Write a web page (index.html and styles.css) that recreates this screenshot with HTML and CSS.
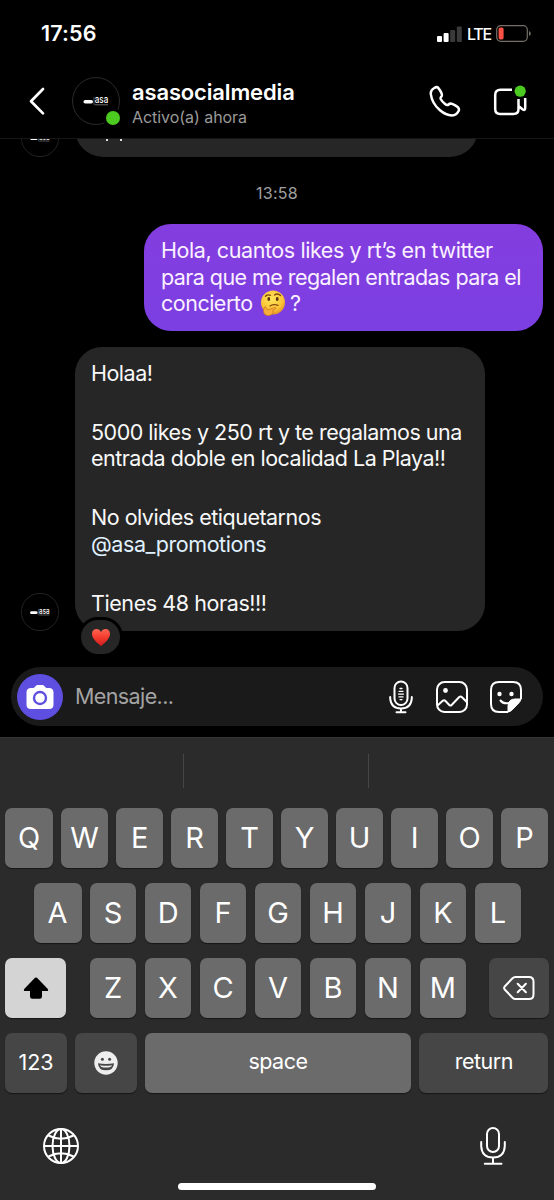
FILE: index.html
```html
<!DOCTYPE html>
<html lang="es">
<head>
<meta charset="utf-8">
<title>asasocialmedia</title>
<link rel="stylesheet" href="styles.css">
</head>
<body>
<svg class="defs" width="0" height="0">
  <defs>
    <symbol id="logo" viewBox="0 0 48 48">
      <circle cx="24" cy="24" r="23.5" fill="#000" stroke="#2b2b2b"/>
      <rect x="11.5" y="23" width="9.500" height="3.600" rx="1.800" fill="#fff"/>
      <path d="M22 20v8" stroke="#777" stroke-width=".7"/>
      <text x="22.800" y="26.200" textLength="13.500" lengthAdjust="spacingAndGlyphs" class="logo-text">asa</text>
      <path d="M23 27.800h13" stroke="#888" stroke-width=".8"/>
    </symbol>
  </defs>
</svg>
<div class="phone">
  <div class="status">
    <span class="clock">17:56</span>
    <svg class="signal" viewBox="0 0 25 16" width="25" height="16">
      <rect x="0" y="10" width="5" height="6" rx="1" fill="#fff"/>
      <rect x="6.6" y="7" width="5" height="9" rx="1" fill="#fff"/>
      <rect x="13.2" y="4" width="5" height="12" rx="1" fill="#3a3a3a"/>
      <rect x="19.8" y="0.5" width="5" height="15.5" rx="1" fill="#3a3a3a"/>
    </svg>
    <span class="net">LTE</span>
    <svg class="battery" viewBox="0 0 35 17" width="35" height="17">
      <rect x=".7" y=".7" width="30.6" height="15.6" rx="4" fill="none" stroke="#747068" stroke-width="1.2"/>
      <rect x="2.6" y="2.4" width="5" height="12" rx="1.6" fill="#fb5145"/>
      <path d="M33 6q1.8.8 1.8 2.5T33 11z" fill="#747068"/>
    </svg>
  </div>

  <header class="header">
    <svg class="back" viewBox="0 0 18 30" width="18" height="30"><path d="M15 3L3 15.200L15 27.400" fill="none" stroke="#fff" stroke-width="2.700" stroke-linecap="round" stroke-linejoin="round"/></svg>
    <div class="avatar"><svg width="48" height="48"><use href="#logo"/></svg><i class="online"></i></div>
    <div class="who"><div class="name">asasocialmedia</div><div class="state">Activo(a) ahora</div></div>
    <svg class="phone-icon" viewBox="0 0 32 32" width="32" height="32"><path d="M5.300 3C3 4.200 1.500 6 1.800 9C2.600 16 6.200 21.200 11 25.300C14.500 28.300 19 30.300 23 30.400C26 30.200 28.500 28.200 29.600 26C30.300 24.600 30 23.400 29 22.300C27 20.700 25.400 19.800 23.200 18.900C21.800 18.400 20.500 18.600 19.500 19.500C18.500 20.500 17.200 20 15.800 18.800C14.200 17.500 12.500 15.500 11.700 14C11.100 12.800 12 12.200 12.700 11.100C13.200 10 13 9.300 12.400 7.900C11.600 6.200 10.500 4.500 9.200 2.900C8.200 1.700 6.600 2.100 5.300 3Z" fill="none" stroke="#fff" stroke-width="2.500" stroke-linejoin="round"/></svg>
    <svg class="video-icon" viewBox="0 0 34 34" width="34" height="34">
      <path d="M19 5.700H7.500Q2.200 5.700 2.200 11V25Q2.200 30 7.200 30H20.500Q25.500 30 25.500 25V15M25.500 22L29.800 25.500Q32.200 26.800 32.200 24V14" fill="none" stroke="#fff" stroke-width="2.500" stroke-linejoin="round"/>
      <circle cx="27.200" cy="7.200" r="5.600" fill="#4bcb1f"/>
    </svg>
  </header>

  <main class="chat">
    <div class="previous">
      <svg class="mini" width="38" height="38"><use href="#logo"/></svg>
      <div class="cut"><i></i><i></i></div>
    </div>
    <div class="stamp">13:58</div>
    <div class="bubble sent">
      <p class="l1">Hola, cuantos likes y rt’s en twitter</p>
      <p class="l2">para que me regalen entradas para el</p>
      <p class="l3">concierto <svg class="thinking" viewBox="0 0 26 26" width="26" height="26" role="img" aria-label="🤔">
        <defs><radialGradient id="face" cx=".45" cy=".35" r=".65"><stop offset="0" stop-color="#ffe45a"/><stop offset=".7" stop-color="#fbc535"/><stop offset="1" stop-color="#e3942b"/></radialGradient></defs>
        <circle cx="13" cy="12.500" r="12" fill="url(#face)"/>
        <path d="M5.500 6.200Q7.500 4.200 10.500 5.300M14.500 5Q17.500 2.800 20.500 5.600" fill="none" stroke="#7a4510" stroke-width="1.300" stroke-linecap="round"/>
        <ellipse cx="8.800" cy="9" rx="1.400" ry="1.900" fill="#553211"/><ellipse cx="17.200" cy="9" rx="1.400" ry="1.900" fill="#553211"/>
        <path d="M10 16Q14 13.700 18 15.400" fill="none" stroke="#884b14" stroke-width="1.300" stroke-linecap="round"/>
        <path d="M4.200 17.200Q5.600 15.800 6.500 18L7.200 20L14.500 17.500Q16.500 17.300 15.500 19L12.500 20.500Q14 22 12.800 23.500Q11 26 7.300 25.600Q3.800 25 3.500 21.500Z" fill="#f7ad38" stroke="#ca7522" stroke-width=".7"/>
      </svg><span class="q">?</span></p>
    </div>
    <div class="incoming">
      <svg class="mini" width="38" height="38"><use href="#logo"/></svg>
      <div class="bubble received">
        <p class="r1">Holaa!</p>
        <p class="para r2">5000 likes y 250 rt y te regalamos una</p>
        <p class="r3">entrada doble en localidad La Playa!!</p>
        <p class="para r4">No olvides etiquetarnos</p>
        <p class="mention">@asa_promotions</p>
        <p class="para r5">Tienes 48 horas!!!</p>
        <div class="reaction"><svg viewBox="0 0 20 19" width="20" height="19" role="img" aria-label="❤️">
          <defs><linearGradient id="heart" x2="0" y2="1"><stop stop-color="#ff6554"/><stop offset=".5" stop-color="#f33b2d"/><stop offset="1" stop-color="#cc1c20"/></linearGradient></defs>
          <path d="M10 18.200C7 15.300 1 11.300 1 5.800C1 3 3 1 5.400 1C7.500 1 9.200 2.200 10 4.200C10.800 2.200 12.500 1 14.600 1C17 1 19 3 19 5.800C19 11.300 13 15.300 10 18.200Z" fill="url(#heart)"/></svg></div>
      </div>
    </div>
  </main>

  <div class="composer">
    <div class="camera"><svg viewBox="0 0 28 26" width="28" height="26">
      <path d="M5 4H7Q8.200 4 9 2.800Q10 1 11.500 1H16.500Q18 1 19 2.800Q19.800 4 21 4H23Q27.500 4 27.500 8.500V20.500Q27.500 25 23 25H5Q.5 25 .5 20.500V8.500Q.5 4 5 4Z" fill="#fff"/>
      <circle cx="14" cy="14" r="6" fill="none" stroke="#5f4fe0" stroke-width="2.400"/></svg></div>
    <span class="placeholder">Mensaje...</span>
    <svg class="voice" viewBox="0 0 24 34" width="24" height="34" fill="none" stroke="#fff" stroke-width="2" stroke-linecap="round">
      <rect x="5.500" y="1.500" width="13" height="23.500" rx="6.500"/>
      <path d="M1.200 17V18.500Q2 28.500 12 28.500T22.800 18.500V17M12 28.500V32M7.500 32.300H16.500"/>
      <path d="M11 8.500H13M10 11.300H14M9.500 14.100H14.500M10 16.900H14M11 19.600H13" stroke-width="1.300"/></svg>
    <svg class="photo" viewBox="0 0 32 32" width="32" height="32" fill="none" stroke="#fff" stroke-width="2" stroke-linejoin="round">
      <rect x="1" y="1" width="30" height="30" rx="7.500"/><circle cx="9.500" cy="9.500" r="2.400" fill="#fff" stroke="none"/>
      <path d="M1.500 24.500L7 19.600Q8.300 18.800 9.500 20L13.500 24.200Q14.600 25 15.600 24L23.500 15.800Q24.800 15 26 16.200L30.800 21"/></svg>
    <svg class="sticker" viewBox="0 0 32 32" width="32" height="32" fill="none" stroke="#fff" stroke-width="2" stroke-linejoin="round">
      <path d="M18 31H9Q1 31 1 23V9Q1 1 9 1H23Q31 1 31 9V18"/>
      <path d="M18 31V25Q18.500 18 25 18H31Q30.500 20 29 21.800L22 29Q20 30.800 18 31Z" fill="#fff" stroke-width="1"/>
      <circle cx="9.500" cy="13" r="2.200" fill="#fff" stroke="none"/><circle cx="21.500" cy="13" r="2.200" fill="#fff" stroke="none"/>
      <path d="M10.500 19.500Q13.500 23.200 18.500 22" stroke-linecap="round"/></svg>
  </div>

  <section class="keyboard">
    <div class="suggest"><i></i><i></i><i></i></div>
    <div class="row"><b class="key edge">Q</b><b class="key">W</b><b class="key">E</b><b class="key">R</b><b class="key">T</b><b class="key">Y</b><b class="key">U</b><b class="key">I</b><b class="key">O</b><b class="key">P</b></div>
    <div class="row second"><b class="key edge">A</b><b class="key">S</b><b class="key">D</b><b class="key">F</b><b class="key">G</b><b class="key">H</b><b class="key">J</b><b class="key">K</b><b class="key">L</b></div>
    <div class="row"><b class="key shift"><svg viewBox="0 0 26 22" width="26" height="22"><path d="M12 .8Q13 0 14 .8L24.800 12Q25.800 14 24 14H19V19.500Q19 21.800 16.700 21.800H9.300Q7 21.800 7 19.500V14H2Q.2 14 1.200 12Z" fill="#000"/></svg></b><b class="key">Z</b><b class="key">X</b><b class="key">C</b><b class="key">V</b><b class="key">B</b><b class="key">N</b><b class="key">M</b><b class="key dark delete"><svg viewBox="0 0 32 24" width="32" height="24" fill="none" stroke="#fff" stroke-width="2" stroke-linejoin="round" stroke-linecap="round"><path d="M12.500 1H26Q30.500 1 30.500 5.500V18.500Q30.500 23 26 23H12.500Q10.800 23 9.500 21.700L1.700 13.500Q.5 12 1.700 10.500L9.500 2.300Q10.800 1 12.500 1ZM14.700 7.800L22.900 16.200M22.900 7.800L14.700 16.200"/></svg></b></div>
    <div class="row bottom"><b class="key dark num">123</b><b class="key dark emoji"><svg viewBox="0 0 24 24" width="24" height="24"><circle cx="12" cy="12" r="11.700" fill="#eee"/><circle cx="8.400" cy="8.300" r="1.500" fill="#474747"/><circle cx="15.600" cy="8.300" r="1.500" fill="#474747"/><path d="M4 12.200Q12 13.800 20 12.200Q19.700 19.300 12 19.300T4 12.200Z" fill="#474747"/><path d="M6 14.200Q12 15.300 18 14.200Q17.500 16.500 12 16.500T6 14.200Z" fill="#eee"/></svg></b><b class="key space">space</b><b class="key dark return">return</b></div>
    <div class="tools">
      <svg viewBox="0 0 36 36" width="36" height="36" fill="none" stroke="#fff" stroke-width="2"><circle cx="18" cy="18" r="17"/><ellipse cx="18" cy="18" rx="8.500" ry="17"/><path d="M18 1V35M1 18H35M5.500 7.500Q18 14 30.500 7.500M5.500 28.500Q18 22 30.500 28.500"/></svg>
      <svg viewBox="0 0 26 38" width="26" height="38" fill="none" stroke="#fff" stroke-width="2" stroke-linecap="round"><rect x="7" y="1" width="12" height="24" rx="6"/><path d="M1.200 15V19Q1.700 30.500 13 30.500T24.800 19V15M13 30.500V36.500M4.800 36.800H21.500"/></svg>
    </div>
    <div class="home"></div>
  </section>
</div>
</body>
</html>
```
FILE: styles.css
```css
* { box-sizing: border-box; }
body { margin: 0; background: #000; }
.defs { position: absolute; }
svg { display: block; flex: none; }
.phone { width: 554px; height: 1200px; overflow: hidden; display: flex; flex-direction: column; background: #000; color: #fff; font-family: Inter, "Liberation Sans", sans-serif; }
.logo-text { font: 500 10px Inter, sans-serif; fill: #fff; }

.status { height: 67px; flex: none; display: flex; align-items: center; padding-left: 41px; }
.clock { width: 396px; padding-bottom: 1px; font-size: 21.5px; font-weight: 600; letter-spacing: .15px; }
.net { width: 26px; margin-left: 5px; font-size: 16px; font-weight: 450; letter-spacing: -1.3px; }
.battery { margin-left: 3px; }

.header { height: 72px; flex: none; display: flex; align-items: center; padding: 0 0 3px 28px; border-bottom: 1px solid #161616; }
.avatar { position: relative; margin-left: 26px; }
.online { position: absolute; right: 0; bottom: 0; width: 14px; height: 14px; border-radius: 50%; background: #4bcb1f; box-shadow: 0 0 0 3px #000; }
.who { width: 297px; margin-left: 12px; padding-top: 5px; }
.name { font-size: 22px; line-height: 26px; font-weight: 600; letter-spacing: -.15px; }
.state { font-size: 16px; line-height: 24px; color: #9a9a9a; letter-spacing: -.05px; }
.video-icon { margin-left: 32px; }

.chat { height: 528px; flex: none; overflow: hidden; display: flex; flex-direction: column; }
.previous { height: 18px; flex: none; display: flex; align-items: flex-end; padding-left: 21px; overflow: hidden; }
.cut { display: flex; gap: 12px; width: 403px; height: 58px; margin-left: 16px; padding: 40px 0 0 31px; border-radius: 28px; background: #262626; }
.cut i { width: 2px; height: 2px; background: #ddd; }
.stamp { margin-top: 26px; text-align: center; font-size: 16px; line-height: 20px; color: #a0a0a0; letter-spacing: .3px; }
.bubble { padding: 13px 16px; border-radius: 27px; font-size: 21.5px; line-height: 26.700px; letter-spacing: -.5px; }
.bubble p { margin: 0; white-space: nowrap; }
.sent { width: 399px; height: 107px; flex: none; margin: 21px 0 0 144px; padding-left: 17px; background: linear-gradient(#843ddf, #7b3fe2); color: #fbf0ff; }
.l1 { letter-spacing: -.42px; }
.l2 { letter-spacing: -.56px; }
.l3 { display: flex; height: 27px; white-space: pre !important; }
.thinking { margin-left: 2px; }
.q { margin-left: 4px; }
.incoming { display: flex; align-items: flex-end; margin: 16px 0 0 21px; }
.received { position: relative; width: 410px; height: 284px; margin-left: 16px; background: #262626; color: #f8f8f8; }
.bubble .para { margin-top: 32px; }
.mention { color: #e0f1ff; letter-spacing: -.42px; }
.r5 { letter-spacing: -.42px; }
.reaction { position: absolute; left: 3px; bottom: -26px; width: 45px; height: 40px; display: flex; align-items: center; justify-content: center; border: 3px solid #000; border-radius: 20px; background: #262626; }

.composer { height: 59px; flex: none; display: flex; align-items: center; margin: 0 11px; padding-left: 6px; border-radius: 30px; background: #1a1a1a; }
.camera { width: 46px; height: 46px; border-radius: 50%; display: flex; align-items: center; justify-content: center; background: #5f4fe0; }
.placeholder { width: 313px; margin-left: 12px; padding-bottom: 2px; font-size: 21.5px; color: #a3a3a3; letter-spacing: -.6px; }
.voice { margin-left: 1px; }
.photo { margin-left: 23px; }
.sticker { margin-left: 22px; }

.keyboard { height: 463px; margin-top: 11px; border-top: 1px solid #353535; background: #2b2b2b; }
.suggest { height: 69.500px; display: flex; align-items: center; padding-bottom: 3px; }
.suggest i { width: 184px; height: 34px; border-right: 1px solid #464646; }
.suggest i + i { width: 185px; }
.suggest i:last-child { border: 0; }
.row { display: flex; gap: 8.300px; height: 60.500px; margin: 0 5px 14.500px; }
.key { width: 46.700px; flex: none; display: flex; align-items: center; justify-content: center; border-radius: 7px; background: #6b6b6b; box-shadow: 0 1px 1px #171717; font-size: 29px; font-weight: 400; }
.edge { width: 48px; }
.second { margin-left: 33.500px; }
.shift { width: 61px; margin-right: 15.400px; background: #d4d4d4; }
.delete { width: 60px; margin-left: 14.600px; }
.dark { background: #464646; }
.num { width: 62px; }
.emoji { width: 61.500px; }
.num, .space, .return { font-size: 21.5px; font-weight: 400; }
.num { padding-bottom: 1px; }
.space, .return { padding-bottom: 4px; letter-spacing: -.5px; }
.space { width: 265.700px; }
.return { width: 129.400px; }
.tools { display: flex; justify-content: space-between; align-items: center; padding: 19px 48px 0 43px; }
.home { width: 198px; height: 7px; margin: 18px auto 0; border-radius: 4px; background: #fff; }
```
